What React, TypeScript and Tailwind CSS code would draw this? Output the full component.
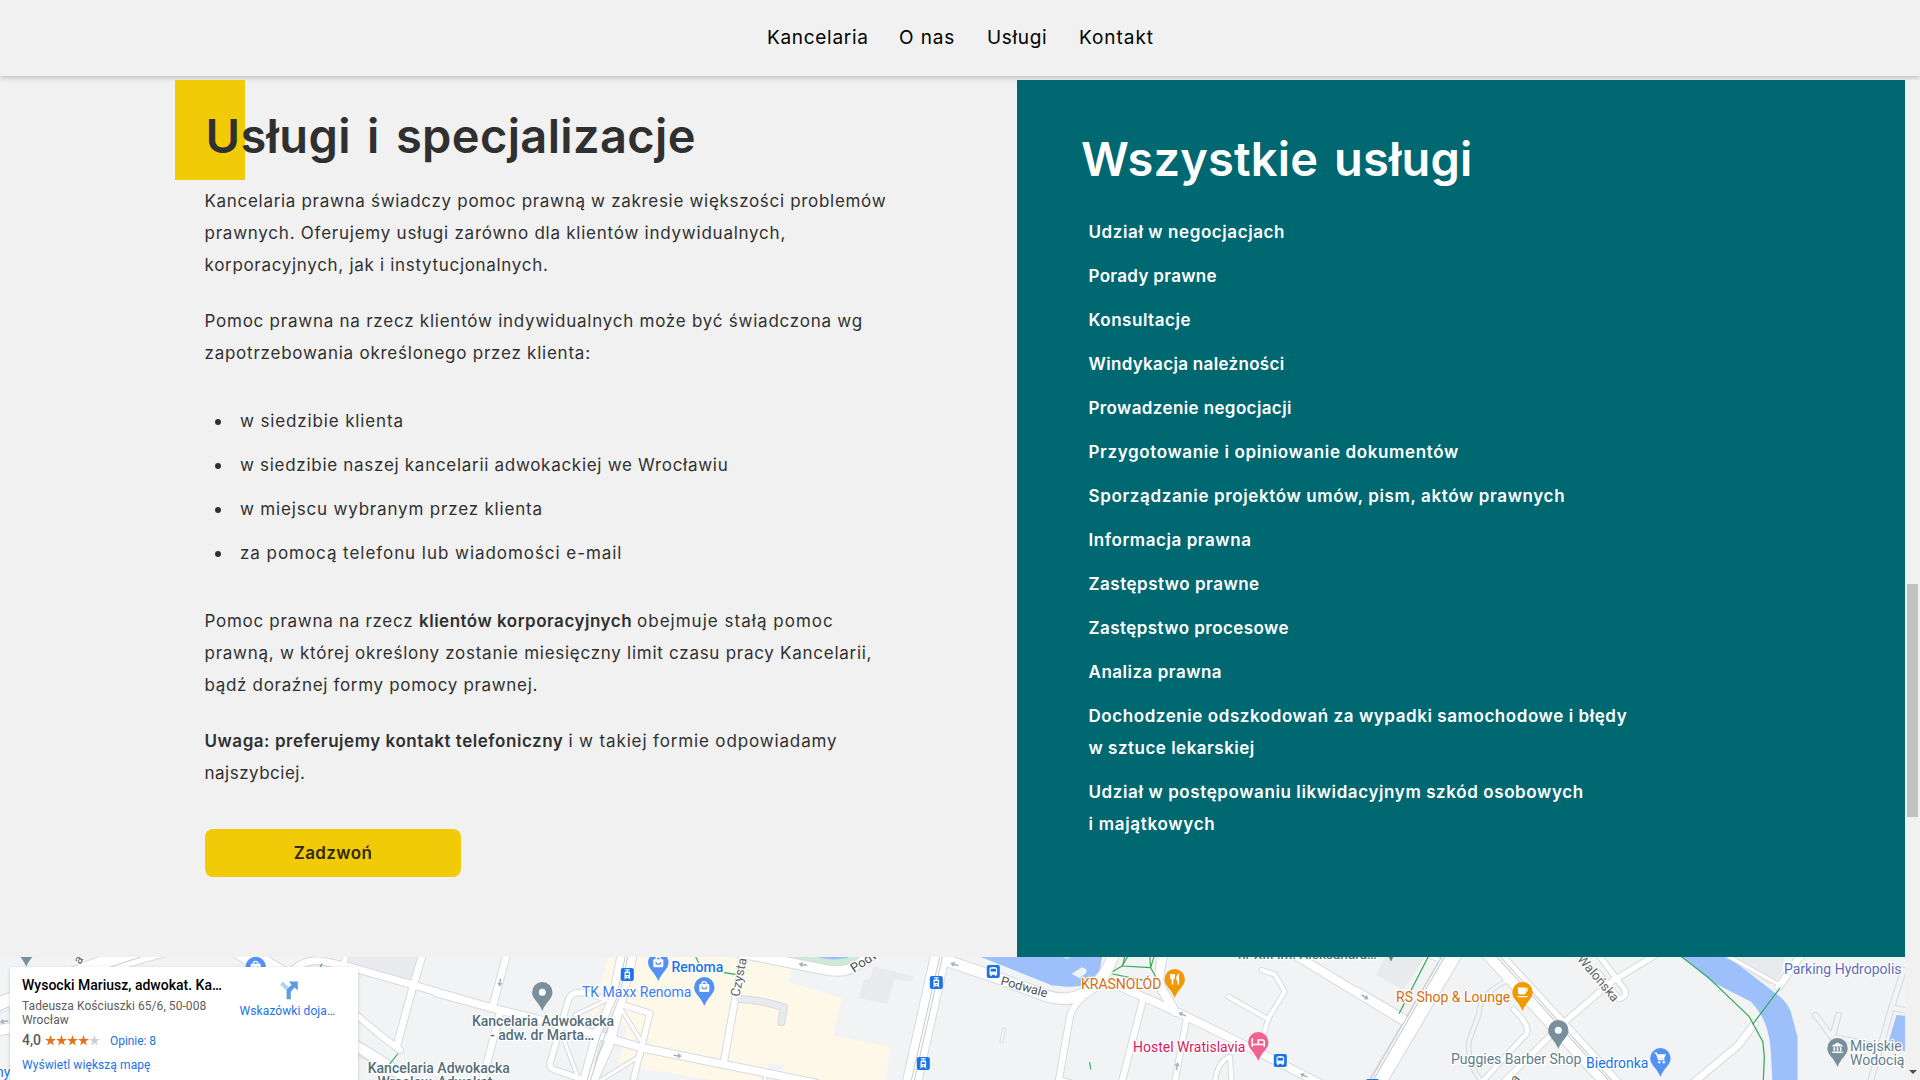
import type { ReactNode } from "react";

type Road = [string, number, string?];
type Tile = { transform: string; areas: [string, string][]; roads: Road[]; rails: string[]; paths: string[] };

const BLOCK = "#e8eaed";
const SAND = "#fef8e8";
const WATER = "#9dc0fb";
const PARK = "#ceead6";
const LAND = "#f1f3f4";

const tiles: Tile[] = [
  {
    transform: "translate(0 950) scale(0.33333)",
    areas: [["M1045 0 L1265 0 L1240 95 L1040 45 Z", BLOCK]],
    roads: [
      ["M-20 172 L250 62 L420 0", 44],
      ["M-20 245 L40 232", 30],
      ["M330 55 L520 0", 22],
      ["M720 0 L850 80", 54],
      ["M880 60 Q910 30 960 32 L1040 48 L1240 105 L1450 166", 20],
      ["M1030 45 L1042 0", 14],
      ["M1272 0 L1240 105 L1190 290", 20],
      ["M1060 188 L1150 262 L1200 300", 18],
      ["M1060 285 L1150 340 L1250 410", 34],
    ],
    rails: ["M-20 190 L250 80", "M320 55 L440 15", "M1060 300 L1200 392"],
    paths: ["M955 60 L966 42", "M1165 347 L1193 312"],
  },
  {
    transform: "translate(440 950) scale(0.33333)",
    areas: [
      ["M510 0 L740 0 L1055 55 L1046 96 L1205 145 L1180 256 L1352 290 L1326 400 L880 400 L535 345 L560 240 L500 160 L452 205 Z", SAND],
      ["M530 222 L560 228 L545 300 L520 290 Z", LAND],
      ["M984 340 L1030 346 L1026 400 L980 400 Z", LAND],
      ["M1300 48 L1420 80 L1414 95 L1362 88 L1342 162 L1258 145 L1272 90 L1292 86 Z", BLOCK],
      ["M1030 0 L1290 0 L1230 44 Q1190 58 1140 48 L1020 20 Z", PARK],
      ["M1110 0 L1240 0 L1222 24 Q1170 34 1130 20 Z", WATER],
    ],
    roads: [
      ["M204 0 L158 170", 20],
      ["M180 190 L125 400", 20],
      ["M-10 128 L170 178 L420 240 L600 292 L860 345 L1130 400", 22],
      ["M495 145 L440 130 Q395 120 385 150 L330 340 Q328 355 345 360 L445 394", 16],
      ["M550 0 L520 150 L472 250 L430 410", 28],
      ["M580 0 L545 140 L508 280 L450 410", 28],
      ["M405 195 L500 150", 9],
      ["M370 265 L415 385", 9],
      ["M535 160 L630 190 L605 290 L575 410", 16],
      ["M545 180 L605 275", 9],
      ["M605 315 L480 392", 9],
      ["M975 380 L975 410", 8],
      ["M912 0 L885 150 L850 345", 19],
      ["M895 146 Q965 150 1032 172 L1024 216", 18, BLOCK],
      ["M900 8 L1000 28 L1150 58 Q1215 72 1250 46 L1320 0", 28],
    ],
    rails: ["M560 0 L528 150 L480 260 L436 410", "M568 0 L536 145 L490 270 L445 410"],
    paths: ["M764 15 L778 42", "M848 67 L890 74"],
  },
  {
    transform: "translate(880 950) scale(0.33333)",
    areas: [
      ["M0 285 L32 290 L14 400 L0 400 Z", SAND],
      ["M250 0 L670 0 L655 85 Q630 112 560 110 L515 106 Z", WATER],
      ["M575 72 L605 52 Q625 56 618 70 L598 84 Z", LAND],
      ["M535 10 L590 10 L560 28 Z", PARK],
    ],
    roads: [
      ["M184 0 L95 400", 54],
      ["M190 28 L370 90 L500 138 Q565 158 610 130 Q680 92 704 0", 32],
      ["M605 145 Q572 175 568 210 L535 400", 18],
      ["M725 112 L900 190 L1060 268 L1320 400", 22],
      ["M790 145 L722 410", 18],
      ["M920 205 L882 410", 16],
      ["M885 185 L842 112 Q830 90 852 0", 26],
      ["M1145 60 L1185 74 L1214 125 L1165 205 L1140 290", 12],
      ["M1045 140 L1165 208", 12],
      ["M1220 0 L1570 212", 24],
      ["M1055 400 L1050 320 Q1010 335 1005 400", 12],
      ["M372 238 L364 275", 5],
      ["M540 388 L590 402", 12],
    ],
    rails: ["M184 0 L92 400", "M192 0 L101 400"],
    paths: ["M755 0 L726 48 L812 53 L828 0", "M726 48 L700 64", "M698 72 L795 92", "M738 0 L728 48 M808 0 L812 53 L828 82", "M629 338 L632 357"],
  },
  {
    transform: "translate(1360 950) scale(0.35714 0.33333)",
    areas: [
      ["M80 0 L195 0 L120 120 L45 75 Z", BLOCK],
      ["M1050 0 L1190 0 L1180 70 L1150 105 L1040 40 Z", BLOCK],
      ["M880 0 L1005 0 L1170 135 Q1205 165 1210 200 L1225 260 L1225 400 L1155 400 L1150 300 Q1145 210 1095 155 L985 95 L905 24 Z", WATER],
      ["M1502 195 L1530 198 L1530 305 L1476 290 Z", WATER],
    ],
    roads: [
      ["M268 0 L42 410", 46],
      ["M182 12 L225 32", 10],
      ["M-10 124 L120 205", 24],
      ["M850 0 L720 85", 16],
      ["M658 0 L742 120 Q748 142 724 146 L668 70", 14],
      ["M710 90 L560 228 L380 420", 16],
      ["M360 0 L712 410", 52],
      ["M405 95 Q330 140 334 190 L306 270 Q296 340 345 400", 10, LAND],
      ["M430 178 Q490 240 456 262 L330 410", 13],
      ["M920 410 L1060 285 L1105 220", 19],
      ["M1245 0 L1172 112", 19],
      ["M1000 0 L1180 108", 9],
      ["M1275 195 L1322 262 L1340 195", 13, LAND],
      ["M1322 260 L1455 290", 13, LAND],
      ["M1522 60 L1488 175 L1428 400", 13, LAND],
      ["M1488 172 L1530 182", 13, LAND],
    ],
    rails: ["M240 0 L24 400", "M248 0 L32 400", "M366 0 L700 395", "M376 0 L708 395"],
    paths: ["M890 12 L975 82 L1090 200 L1128 275 L1132 320 L1129 400", "M1176 114 L1100 222", "M195 12 L110 190"],
  },
];

type Label = { x: number; y: number; text: string; color: string; medium?: boolean; rotate?: number; anchor?: "middle" | "start"; size?: number };

const labels: Label[] = [
  { x: 671.5, y: 972, text: "Renoma", color: "#1a73e8", medium: true },
  { x: 582, y: 997, text: "TK Maxx Renoma", color: "#3b7ded" },
  { x: 543, y: 1026, text: "Kancelaria Adwokacka", color: "#546e7a", medium: true, anchor: "middle" },
  { x: 542, y: 1040, text: "- adw. dr Marta…", color: "#546e7a", medium: true, anchor: "middle" },
  { x: 438.8, y: 1073, text: "Kancelaria Adwokacka", color: "#546e7a", medium: true, anchor: "middle" },
  { x: 435, y: 1087, text: "Wrocław, Adwokat", color: "#546e7a", medium: true, anchor: "middle" },
  { x: 743, y: 978, text: "Czysta", color: "#5f6368", rotate: -79, anchor: "middle", size: 13 },
  { x: 1023, y: 991, text: "Podwale", color: "#4a4e55", rotate: 16, anchor: "middle", size: 12.5 },
  { x: 854, y: 973, text: "Podwale", color: "#4a4e55", rotate: -33, size: 13 },
  { x: 1081, y: 989.3, text: "KRASNOLÓD", color: "#d56e0c" },
  { x: 1133, y: 1052, text: "Hostel Wratislavia", color: "#d81b60" },
  { x: 1238, y: 959, text: "nr XIII im. Aleksandra…", color: "#546e7a", medium: true, size: 13.5 },
  { x: 1396, y: 1002, text: "RS Shop & Lounge", color: "#d56e0c" },
  { x: 1451, y: 1064.3, text: "Puggies Barber Shop", color: "#607d8b" },
  { x: 1586, y: 1068, text: "Biedronka", color: "#1a73e8" },
  { x: 1850, y: 1051, text: "Miejskie", color: "#607d8b" },
  { x: 1850, y: 1065, text: "Wodociągi", color: "#607d8b" },
  { x: 1784, y: 974, text: "Parking Hydropolis", color: "#5c6bc0" },
  { x: 1595, y: 981, text: "Walońska", color: "#5f6368", rotate: 50, anchor: "middle", size: 13 },
  { x: 1517, y: 1083, text: "ra", color: "#5f6368", rotate: -52, anchor: "middle", size: 13 },
  { x: 82, y: 962, text: "a", color: "#5f6368", rotate: -60, anchor: "middle", size: 13 },
  { x: -4, y: 1077, text: "ny", color: "#1a73e8" },
];

const bag = (
  <g>
    <rect x="-5" y="-3.2" width="10" height="8" rx="1" fill="#fff" />
    <path d="M-2.4 -3 a2.4 2.6 0 0 1 4.8 0" fill="none" stroke="#fff" strokeWidth="1.3" />
    <path d="M-2.4 -0.6 a2.4 2.4 0 0 0 4.8 0" fill="none" stroke="#5491f5" strokeWidth="1.2" />
  </g>
);
const dot = <circle r="3.5" fill="#fff" />;
const food = (
  <path d="M-4.6 -5.2 V-1.6 Q-4.6 0.2 -3 0.4 V5.4 H-1.4 V0.4 Q0.2 0.2 0.2 -1.6 V-5.2 Z M4.4 -5.4 Q1.6 -4.6 1.6 -1 V1 H2.8 V5.4 H4.4 Z" fill="#fff" />
);
const bed = (
  <path d="M-6 -4 V4.4 M-6 2.2 H6 V4.4 M6 2.2 V-0.4 Q6 -2.4 4 -2.4 H0 V1.4" fill="none" stroke="#fff" strokeWidth="1.5" />
);
const cup = (
  <g>
    <path d="M-4.6 -4.6 H3.6 V0 Q3.6 2.4 1.4 2.4 H-2.4 Q-4.6 2.4 -4.6 0 Z M-5 3.8 H5 V5 H-5 Z" fill="#fff" />
    <path d="M3.4 -3.8 H5 V-1.2 H3.4" fill="none" stroke="#fff" strokeWidth="1" />
  </g>
);
const cart = (
  <g>
    <path d="M-6 -5 H-4 L-1.6 1.4 H4" fill="none" stroke="#fff" strokeWidth="1.3" />
    <path d="M-3.6 -4 H5.6 L3.6 0.6 H-2 Z" fill="#fff" />
    <circle cx="-1.2" cy="4" r="1.2" fill="#fff" />
    <circle cx="3.4" cy="4" r="1.2" fill="#fff" />
  </g>
);
const museum = (
  <path d="M0 -5.6 L5.2 -2.8 V-1.8 H-5.2 V-2.8 Z M-4 -1 H-2.4 V2.6 H-4 Z M-0.8 -1 H0.8 V2.6 H-0.8 Z M2.4 -1 H4 V2.6 H2.4 Z M-5.2 3.2 H5.2 V4.8 H-5.2 Z" fill="#fff" />
);

const pins: { x: number; y: number; color: string; glyph: ReactNode }[] = [
  { x: 26.3, y: 948, color: "#78909c", glyph: dot },
  { x: 255.7, y: 967, color: "#5491f5", glyph: bag },
  { x: 542.3, y: 992.3, color: "#78909c", glyph: dot },
  { x: 658.3, y: 962.5, color: "#5491f5", glyph: bag },
  { x: 704.3, y: 987.2, color: "#5491f5", glyph: bag },
  { x: 1174.7, y: 979.2, color: "#f29900", glyph: food },
  { x: 1258.3, y: 1042.3, color: "#f06292", glyph: bed },
  { x: 1391, y: 943, color: "#607d8b", glyph: dot },
  { x: 1522.5, y: 992.2, color: "#f29900", glyph: cup },
  { x: 1558.3, y: 1030.3, color: "#78909c", glyph: dot },
  { x: 1660.4, y: 1058.2, color: "#5491f5", glyph: cart },
  { x: 1837.5, y: 1048.2, color: "#78909c", glyph: museum },
];

const stops = [
  { x: 627.3, y: 974.4, tram: true },
  { x: 936.3, y: 982.4, tram: true },
  { x: 923.3, y: 1063.4, tram: true },
  { x: 993.3, y: 971.4, tram: false },
  { x: 1280.3, y: 1060.4, tram: false },
  { x: 1372.5, y: 1085.4, tram: false },
];

const arrows = [
  { x: 500, y: 982.5, rotate: 98 },
  { x: 677.5, y: 1055.7, rotate: 6 },
  { x: 803, y: 964.7, rotate: 188 },
  { x: 954.5, y: 964.5, rotate: 195 },
  { x: 1182.5, y: 1014.5, rotate: 205 },
  { x: 1177, y: 1066.5, rotate: -80 },
  { x: 1304, y: 1075.5, rotate: 205 },
  { x: 1365, y: 997, rotate: 30 },
  { x: 4, y: 1021.5, rotate: 170 },
];

function CityMap() {
  return (
    <svg className="block h-[123px] w-[1905px]" viewBox="0 957 1905 123" fontFamily="Roboto, sans-serif">
      <rect x="0" y="957" width="1905" height="123" fill={LAND} />
      {tiles.map((t) => (
        <g key={t.transform} transform={t.transform}>
          {t.areas.map(([d, c]) => <path key={d} d={d} fill={c} />)}
        </g>
      ))}
      {tiles.map((t) => (
        <g key={t.transform} transform={t.transform} fill="none" stroke="#d8dade" strokeLinecap="round" strokeLinejoin="round">
          {t.roads.map(([d, w]) => <path key={d} d={d} strokeWidth={w + 6} />)}
        </g>
      ))}
      {tiles.map((t) => (
        <g key={t.transform} transform={t.transform} fill="none" strokeLinecap="round" strokeLinejoin="round">
          {t.roads.map(([d, w, c]) => <path key={d} d={d} strokeWidth={w} stroke={c ?? "#fff"} />)}
          {t.rails.map((d) => <path key={d} d={d} strokeWidth="3" stroke="#c6c9ce" />)}
          {t.paths.map((d) => <path key={d} d={d} strokeWidth="3.4" stroke="#34a853" />)}
        </g>
      ))}
      {arrows.map((a) => (
        <g key={`${a.x}-${a.y}`} transform={`translate(${a.x} ${a.y}) rotate(${a.rotate})`}>
          <path d="M-4 0 H2" stroke="#a9b0c0" strokeWidth="1.5" fill="none" />
          <path d="M0.4 -2.8 L4.4 0 L0.4 2.8 Z" fill="#a9b0c0" />
        </g>
      ))}
      {stops.map((s) => (
        <g key={`${s.x}-${s.y}`} transform={`translate(${s.x} ${s.y})`}>
          <rect x="-6.5" y="-6.5" width="13" height="13" rx="2" fill="#1a73e8" />
          {s.tram ? (
            <g>
              <path d="M-2.5 -4.6 H2.5 M0 -4.6 V-2.4 M-1.8 3.4 L-3 5 M1.8 3.4 L3 5" stroke="#fff" strokeWidth="1" />
              <rect x="-2.8" y="-2.8" width="5.6" height="6.6" rx="1" fill="#fff" />
              <rect x="-1.6" y="-1.2" width="3.2" height="1.8" fill="#1a73e8" />
              <rect x="-0.6" y="1.8" width="1.2" height="1" fill="#1a73e8" />
            </g>
          ) : (
            <g>
              <path d="M-3.8 -2.6 Q-3.8 -4.4 0 -4.4 Q3.8 -4.4 3.8 -2.6 V3.4 H3 V4.6 H1.6 V3.4 H-1.6 V4.6 H-3 V3.4 H-3.8 Z" fill="#fff" />
              <rect x="-2.7" y="-2.6" width="5.4" height="2.8" fill="#1a73e8" />
            </g>
          )}
        </g>
      ))}
      {labels.map((l) => (
        <text
          key={`${l.x}-${l.y}`}
          transform={`translate(${l.x} ${l.y}) rotate(${l.rotate ?? 0})`}
          textAnchor={l.anchor ?? "start"}
          fontSize={l.size ?? 14}
          fontWeight={l.medium ? 500 : 400}
          fill={l.color}
          stroke="#fff"
          strokeWidth="2.5"
          strokeLinejoin="round"
          paintOrder="stroke"
        >
          {l.text}
        </text>
      ))}
      {pins.map((p) => (
        <g key={`${p.x}-${p.y}`} transform={`translate(${p.x} ${p.y})`}>
          <path d="M-10.2 0 A10.2 10.2 0 1 1 10.2 0 C10.2 3.4 8.4 6 6 9 C3.4 12.2 1.4 15 0 18.8 C-1.4 15 -3.4 12.2 -6 9 C-8.4 6 -10.2 3.4 -10.2 0 Z" fill={p.color} />
          {p.glyph}
        </g>
      ))}
    </svg>
  );
}

function Star({ filled }: { filled: boolean }) {
  return (
    <svg className="block h-[11px] w-[11px]" viewBox="0 0 24 24">
      <path d="M12 0 L14.9 8.6 H24 L16.6 14 L19.4 23 L12 17.6 L4.6 23 L7.4 14 L0 8.6 H9.1 Z" fill={filled ? "#e7711b" : "#cfcfcf"} />
    </svg>
  );
}

function PlaceCard() {
  return (
    <div className="absolute left-[10px] top-[10px] flex h-[113px] w-[348px] justify-between rounded-t-[2px] bg-white pl-3 pr-[23px] font-[Roboto,sans-serif] text-xs text-[#5b5b5b] shadow-[0_1px_4px_-1px_rgba(0,0,0,0.3)]">
      <div className="pt-[9px]">
        <div className="whitespace-nowrap text-sm/[18px] font-medium text-black">Wysocki Mariusz, adwokat. Ka…</div>
        <div className="mt-[5px] whitespace-nowrap leading-[14px] tracking-[0.06px]">
          Tadeusza Kościuszki 65/6, 50-008
          <br />
          Wrocław
        </div>
        <div className="mt-[5px] flex h-4 items-center">
          <span className="w-[23px] text-sm/[16px] font-medium">4,0</span>
          {[1, 2, 3, 4, 5].map((n) => <Star key={n} filled={n < 5} />)}
          <span className="ml-[10px] mt-px leading-4 tracking-[-0.05px] text-[#1a73e8]">Opinie: 8</span>
        </div>
        <div className="mt-[9px] leading-4 tracking-[0.08px] text-[#1a73e8]">Wyświetl większą mapę</div>
      </div>
      <div className="flex flex-col items-center pt-[13px]">
        <svg className="ml-[3px] block h-5 w-5" viewBox="0 0 20 20">
          <path d="M1 4.4 L4 1.4 L10.6 8 L7.6 11 Z" fill="#b7d2f6" />
          <path d="M7.6 19.2 V12.2 Q7.6 9.4 9.6 7.6 L12.6 4.7 L9.8 1.6 H18.8 V10.6 L15.6 7.6 L12.8 10.4 Q11.8 11.4 11.8 12.8 V19.2 Z" fill="#5f9be6" />
        </svg>
        <span className="mt-[3px] whitespace-nowrap leading-4 tracking-[0.08px] text-[#1a73e8]">Wskazówki doja…</span>
      </div>
    </div>
  );
}

const services: [string, string][][] = [
  [["Udział w negocjacjach", "tracking-[0.59px]"]],
  [["Porady prawne", "tracking-[0.32px]"]],
  [["Konsultacje", "tracking-[0.52px]"]],
  [["Windykacja należności", "tracking-[0.32px]"]],
  [["Prowadzenie negocjacji", "tracking-[0.38px]"]],
  [["Przygotowanie i opiniowanie dokumentów", "tracking-[0.63px]"]],
  [["Sporządzanie projektów umów, pism, aktów prawnych", "tracking-[0.63px]"]],
  [["Informacja prawna", "tracking-[0.56px]"]],
  [["Zastępstwo prawne", "tracking-[0.5px]"]],
  [["Zastępstwo procesowe", "tracking-[0.44px]"]],
  [["Analiza prawna", "tracking-[0.51px]"]],
  [["Dochodzenie odszkodowań za wypadki samochodowe i błędy", "tracking-[0.57px]"], ["w sztuce lekarskiej", "tracking-[0.5px]"]],
  [["Udział w postępowaniu likwidacyjnym szkód osobowych", "tracking-[0.6px]"], ["i majątkowych", "tracking-[0.71px]"]],
];

const places: [string, string][] = [
  ["w siedzibie klienta", "tracking-[0.86px]"],
  ["w siedzibie naszej kancelarii adwokackiej we Wrocławiu", "tracking-[0.71px]"],
  ["w miejscu wybranym przez klienta", "tracking-[0.82px]"],
  ["za pomocą telefonu lub wiadomości e-mail", "tracking-[0.95px]"],
];

export default function App() {
  return (
    <div className="flex h-[1080px] w-[1920px] overflow-hidden bg-[#f1f1f1] font-[Inter,sans-serif] text-[17px]/[32px] text-[#303030]">
      <div className="flex w-[1905px] flex-col">
        <header className="h-[76px] w-[1920px] shrink-0 bg-[#f1f1f1] shadow-[0_1px_6px_rgba(0,0,0,0.26)]">
          <nav className="flex whitespace-nowrap pl-[767px] pt-[22px] text-[19px]/[32px] text-black">
            <a className="w-[132px] tracking-[0.7px]">Kancelaria</a>
            <a className="w-[88px] tracking-[0.9px]">O nas</a>
            <a className="w-[92px] tracking-[0.66px]">Usługi</a>
            <a className="tracking-[0.97px]">Kontakt</a>
          </nav>
        </header>

        <main className="relative mt-1 flex h-[877px] shrink-0 whitespace-nowrap">
          <section className="w-[1017px] pl-[204.5px]">
            <div className="absolute left-[175px] top-0 h-[100px] w-[70px] bg-[#f1cb08]" />
            <h1 className="relative ml-px pt-7 text-[47px]/[56px] font-semibold tracking-[0.36px] [word-spacing:4px]">Usługi i specjalizacje</h1>
            <p className="mt-[21px]">
              <span className="block tracking-[0.69px]">Kancelaria prawna świadczy pomoc prawną w zakresie większości problemów</span>
              <span className="block tracking-[0.76px]">prawnych. Oferujemy usługi zarówno dla klientów indywidualnych,</span>
              <span className="block tracking-[0.69px]">korporacyjnych, jak i instytucjonalnych.</span>
            </p>
            <p className="mt-6">
              <span className="block tracking-[0.76px]">Pomoc prawna na rzecz klientów indywidualnych może być świadczona wg</span>
              <span className="block tracking-[0.76px]">zapotrzebowania określonego przez klienta:</span>
            </p>
            <ul className="mt-9 flex flex-col gap-3">
              {places.map(([text, tracking]) => (
                <li key={text} className="flex items-center">
                  <span className="ml-[10.5px] mr-[19px] mt-[2px] h-1.5 w-1.5 rounded-full bg-[#303030]" />
                  <span className={tracking}>{text}</span>
                </li>
              ))}
            </ul>
            <p className="mt-9">
              <span className="flex">
                <span className="w-[214.5px] tracking-[0.71px]">Pomoc prawna na rzecz</span>
                <strong className="w-[218px] font-semibold tracking-[0.5px]">klientów korporacyjnych</strong>
                <span className="tracking-[1.02px]">obejmuje stałą pomoc</span>
              </span>
              <span className="block tracking-[0.73px]">prawną, w której określony zostanie miesięczny limit czasu pracy Kancelarii,</span>
              <span className="block tracking-[0.68px]">bądź doraźnej formy pomocy prawnej.</span>
            </p>
            <p className="mt-6">
              <span className="flex">
                <strong className="w-[364px] font-semibold tracking-[0.54px]">Uwaga: preferujemy kontakt telefoniczny</strong>
                <span className="tracking-[0.86px]">i w takiej formie odpowiadamy</span>
              </span>
              <span className="block tracking-[0.5px]">najszybciej.</span>
            </p>
            <a className="ml-[0.5px] mt-10 flex h-12 w-64 items-center justify-center rounded-lg bg-[#f1cb08] font-semibold tracking-[0.4px] text-[#302903]">Zadzwoń</a>
          </section>

          <section className="w-[888px] bg-[#006871] pl-16 pt-[51px] text-white">
            <h2 className="text-[47px]/[56px] font-semibold tracking-[0.15px] [word-spacing:4px]">Wszystkie usługi</h2>
            <ul className="ml-[7.5px] mt-[29px] flex flex-col gap-3 font-semibold">
              {services.map((lines) => (
                <li key={lines[0][0]}>
                  {lines.map(([text, tracking]) => (
                    <div key={text} className={tracking}>{text}</div>
                  ))}
                </li>
              ))}
            </ul>
          </section>
        </main>

        <section className="relative h-[123px] shrink-0">
          <CityMap />
          <PlaceCard />
        </section>
      </div>

      <div className="relative mt-20 flex w-[15px] flex-col items-center bg-[#f1f1f1]">
        <div className="mt-[504px] h-[233px] w-[11px] bg-[#c1c1c1]" />
        <div className="mt-[253px] h-0 w-0 border-x-[4px] border-t-[4px] border-x-transparent border-t-[#505050]" />
      </div>
    </div>
  );
}
